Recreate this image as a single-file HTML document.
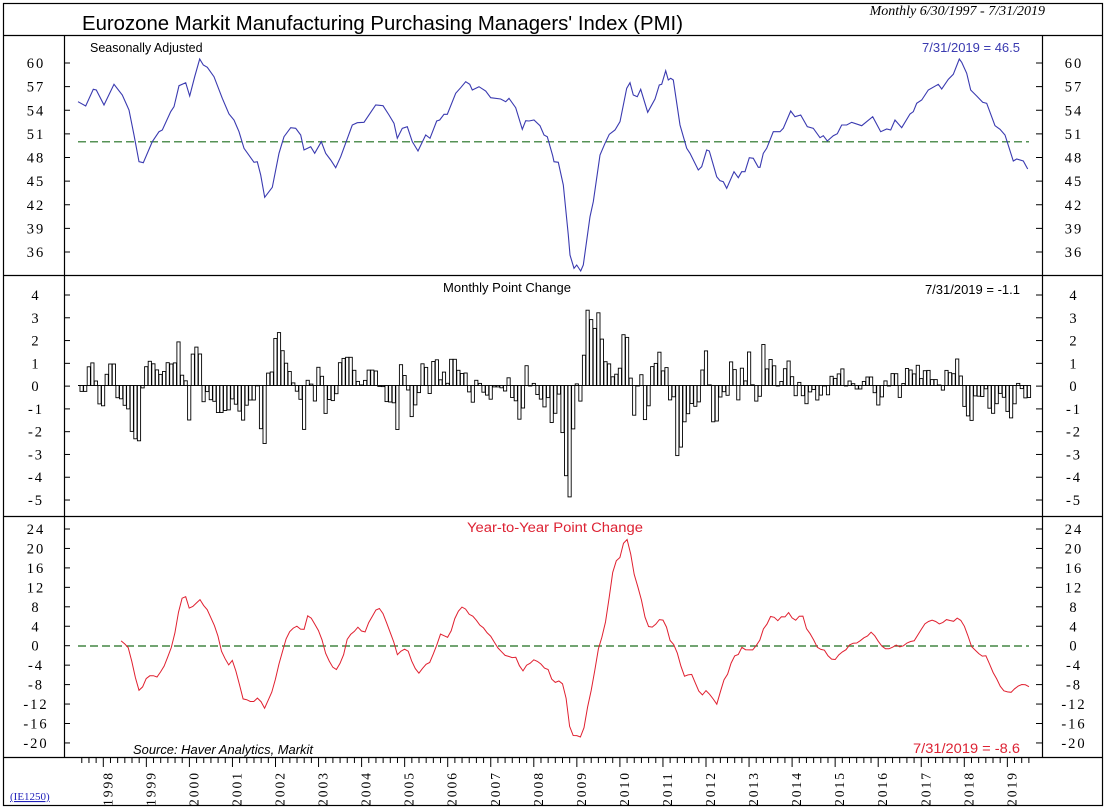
<!DOCTYPE html>
<html><head><meta charset="utf-8"><style>
html,body{margin:0;padding:0;background:#fff;width:1106px;height:809px;overflow:hidden}
svg{display:block}
</style></head><body>
<svg id="s" width="1106" height="809" xmlns="http://www.w3.org/2000/svg">
<rect x="0" y="0" width="1106" height="809" fill="#fff"/>
<rect x="3.5" y="3.5" width="1099" height="802" fill="none" stroke="#000" stroke-width="1.2"/>
<line x1="3.5" y1="35.5" x2="1102.5" y2="35.5" stroke="#000" stroke-width="1.2"/>
<line x1="3.5" y1="275.5" x2="1102.5" y2="275.5" stroke="#000" stroke-width="1.2"/>
<line x1="3.5" y1="516.5" x2="1102.5" y2="516.5" stroke="#000" stroke-width="1.2"/>
<line x1="3.5" y1="757.5" x2="1102.5" y2="757.5" stroke="#000" stroke-width="1.2"/>
<line x1="64.5" y1="35.5" x2="64.5" y2="757.5" stroke="#000" stroke-width="1.2"/>
<line x1="1042.5" y1="35.5" x2="1042.5" y2="757.5" stroke="#000" stroke-width="1.2"/>
<text x="82" y="30" font-family="Liberation Sans, sans-serif" font-size="20.5" fill="#000" textLength="601" lengthAdjust="spacingAndGlyphs">Eurozone Markit Manufacturing Purchasing Managers' Index (PMI)</text>
<text x="1045" y="15" text-anchor="end" font-family="Liberation Serif, serif" font-style="italic" font-size="14" fill="#000">Monthly 6/30/1997 - 7/31/2019</text>
<text x="90" y="52" font-family="Liberation Sans, sans-serif" font-size="12.5" fill="#000">Seasonally Adjusted</text>
<text x="1020" y="52" text-anchor="end" font-family="Liberation Sans, sans-serif" font-size="13" fill="#3a3ab0">7/31/2019 = 46.5</text>
<text x="507" y="292" text-anchor="middle" font-family="Liberation Sans, sans-serif" font-size="13" fill="#000">Monthly Point Change</text>
<text x="1020" y="294" text-anchor="end" font-family="Liberation Sans, sans-serif" font-size="13" fill="#000">7/31/2019 = -1.1</text>
<text x="555" y="532" text-anchor="middle" font-family="Liberation Sans, sans-serif" font-size="13.5" fill="#dd2233" textLength="176" lengthAdjust="spacingAndGlyphs">Year-to-Year Point Change</text>
<text x="133" y="754" font-family="Liberation Sans, sans-serif" font-style="italic" font-size="13" fill="#000" textLength="180" lengthAdjust="spacingAndGlyphs">Source: Haver Analytics, Markit</text>
<text x="1020" y="753" text-anchor="end" font-family="Liberation Sans, sans-serif" font-size="13.5" fill="#dd2233" textLength="107" lengthAdjust="spacingAndGlyphs">7/31/2019 = -8.6</text>
<text x="10" y="800" font-family="Liberation Serif, serif" font-size="11" fill="#2222bb" text-decoration="underline">(IE1250)</text>
<g id="g"></g>
</svg>
<script>
(function(){
var NS="http://www.w3.org/2000/svg",g=document.getElementById("g");
function el(t,a,txt){var e=document.createElementNS(NS,t);for(var k in a)e.setAttribute(k,a[k]);if(txt!=null)e.textContent=txt;g.appendChild(e);return e;}
function axis(vals,y0,step){vals.forEach(function(v,i){var y=y0+i*step;
 el("line",{x1:64.5,y1:y,x2:70,y2:y,stroke:"#000","stroke-width":1});
 el("line",{x1:1036,y1:y,x2:1042.5,y2:y,stroke:"#000","stroke-width":1});
 el("text",{x:36,y:y+5,"text-anchor":"middle","font-family":"Liberation Serif, serif","font-size":14.5,"letter-spacing":"2"},String(v));
 el("text",{x:1074,y:y+5,"text-anchor":"middle","font-family":"Liberation Serif, serif","font-size":14.5,"letter-spacing":"2"},String(v));});}
axis([60,57,54,51,48,45,42,39,36],63,23.625);
axis([4,3,2,1,0,-1,-2,-3,-4,-5],295,22.78);
axis([24,20,16,12,8,4,0,-4,-8,-12,-16,-20],529,19.45);
var X0=103.3,YR=43.05;
for(var m=-6;m<=266;m+=2){var x=X0+m*YR/12; if(x<78||x>1029)continue; var maj=(m%12===0);
 el("line",{x1:x,y1:757.5,x2:x,y2:maj?767:763,stroke:"#000","stroke-width":1});}
for(var yr=1998;yr<=2019;yr++){var x=X0+(yr-1998)*YR+4;
 el("text",{x:0,y:0,transform:"translate("+(x+5)+",806) rotate(-90)","font-family":"Liberation Serif, serif","font-size":13.5,"letter-spacing":"2"},String(yr));}
var a=[[42,200],[65,213],[88,163],[97,165],[120,210],[150,148],[175,180],[195,225],[210,300],[225,380],[238,383],[265,320],[285,290],[295,285],[320,230],[330,215],[345,152],[365,143],[377,183],[392,125],[407,72],[418,90],[430,97],[450,125],[475,190],[495,237],[510,255],[525,290],[540,340],[570,382],[580,380],[590,420],[602,487],[625,457],[645,355],[660,305],[680,278],[695,280],[710,300],[720,345],[740,335],[752,355],[772,320],[785,355],[800,375],[815,398],[830,365],[865,270],[880,263],[900,262],[935,210],[957,212],[975,240],[990,265],[1000,310],[1015,280],[1030,275],[1045,320],[1062,348],[1085,300],[1098,310],[1118,258],[1127,255],[1140,238],[1150,238],[1175,175],[1190,158],[1205,140],[1217,148],[1225,165],[1245,155],[1265,168],[1280,188],[1310,192],[1325,200],[1335,190],[1355,218],[1375,283],[1385,257],[1395,258],[1410,255],[1428,272],[1440,300],[1450,305],[1466,362]];
var b=[[12,380],[25,382],[40,450],[55,600],[60,660],[72,700],[80,690],[92,708],[100,690],[120,545],[130,500],[150,360],[165,325],[178,298],[195,285],[210,260],[230,160],[240,143],[250,180],[262,185],[272,163],[293,232],[315,192],[328,150],[335,148],[347,107],[355,135],[362,130],[370,135],[390,270],[410,340],[420,355],[445,405],[455,395],[470,345],[478,348],[500,425],[510,437],[520,440],[530,460],[552,410],[565,428],[575,410],[585,410],[598,368],[610,370],[625,397],[630,397],[640,355],[650,340],[670,290],[690,290],[700,280],[722,228],[735,245],[752,240],[772,275],[790,280],[810,308],[820,302],[832,318],[850,302],[862,296],[875,270],[890,270],[905,262],[935,272],[968,245],[992,290],[1010,282],[1022,285],[1035,255],[1055,278],[1080,237],[1090,230],[1100,205],[1115,195],[1135,165],[1165,148],[1175,162],[1195,133],[1210,118],[1228,72],[1235,82],[1250,115],[1262,165],[1280,183],[1298,202],[1310,205],[1335,272],[1350,283],[1365,300],[1390,378],[1400,372],[1420,378],[1433,402]];
var P=[];a.forEach(function(p){P.push([64+p[0]/3,35+p[1]/3]);});b.forEach(function(p){P.push([550+p[0]/3,35+p[1]/3]);});
el("line",{x1:78,y1:141.8,x2:1029,y2:141.8,stroke:"#1f6e1f","stroke-width":1.2,"stroke-dasharray":"8,4"});
el("polyline",{points:P.map(function(p){return p[0].toFixed(1)+","+p[1].toFixed(1)}).join(" "),fill:"none",stroke:"#3a3ab0","stroke-width":1.1});
function interp(x){for(var i=1;i<P.length;i++){if(P[i][0]>=x){var p0=P[i-1],p1=P[i];var t=(x-p0[0])/((p1[0]-p0[0])||1);return p0[1]+t*(p1[1]-p0[1]);}}return P[P.length-1][1];}
var N=266,V=[],XS=[];
for(var i=0;i<N;i++){var x=78+i*(1029-78)/(N-1);XS.push(x);V.push(60-(interp(x)-63)/7.875);}
el("line",{x1:78,y1:385.5,x2:1030,y2:385.5,stroke:"#000","stroke-width":1});
var bw=3.2;
for(var i=1;i<N;i++){var d=V[i]-V[i-1];var h=d*22.78;var y=h>0?385.5-h:385.5;
 el("rect",{x:(XS[i]-bw/2).toFixed(1),y:y.toFixed(1),width:bw,height:Math.max(0.5,Math.abs(h)).toFixed(1),fill:"#fff",stroke:"#000","stroke-width":0.9});}
el("line",{x1:78,y1:646,x2:1029,y2:646,stroke:"#1f6e1f","stroke-width":1.2,"stroke-dasharray":"8,4"});
var pts=[];for(var i=12;i<N;i++){var yy=V[i]-V[i-12];pts.push(XS[i].toFixed(1)+","+(646-yy*4.862).toFixed(1));}
el("polyline",{points:pts.join(" "),fill:"none",stroke:"#e02030","stroke-width":1});
})();
</script>
</body></html>
